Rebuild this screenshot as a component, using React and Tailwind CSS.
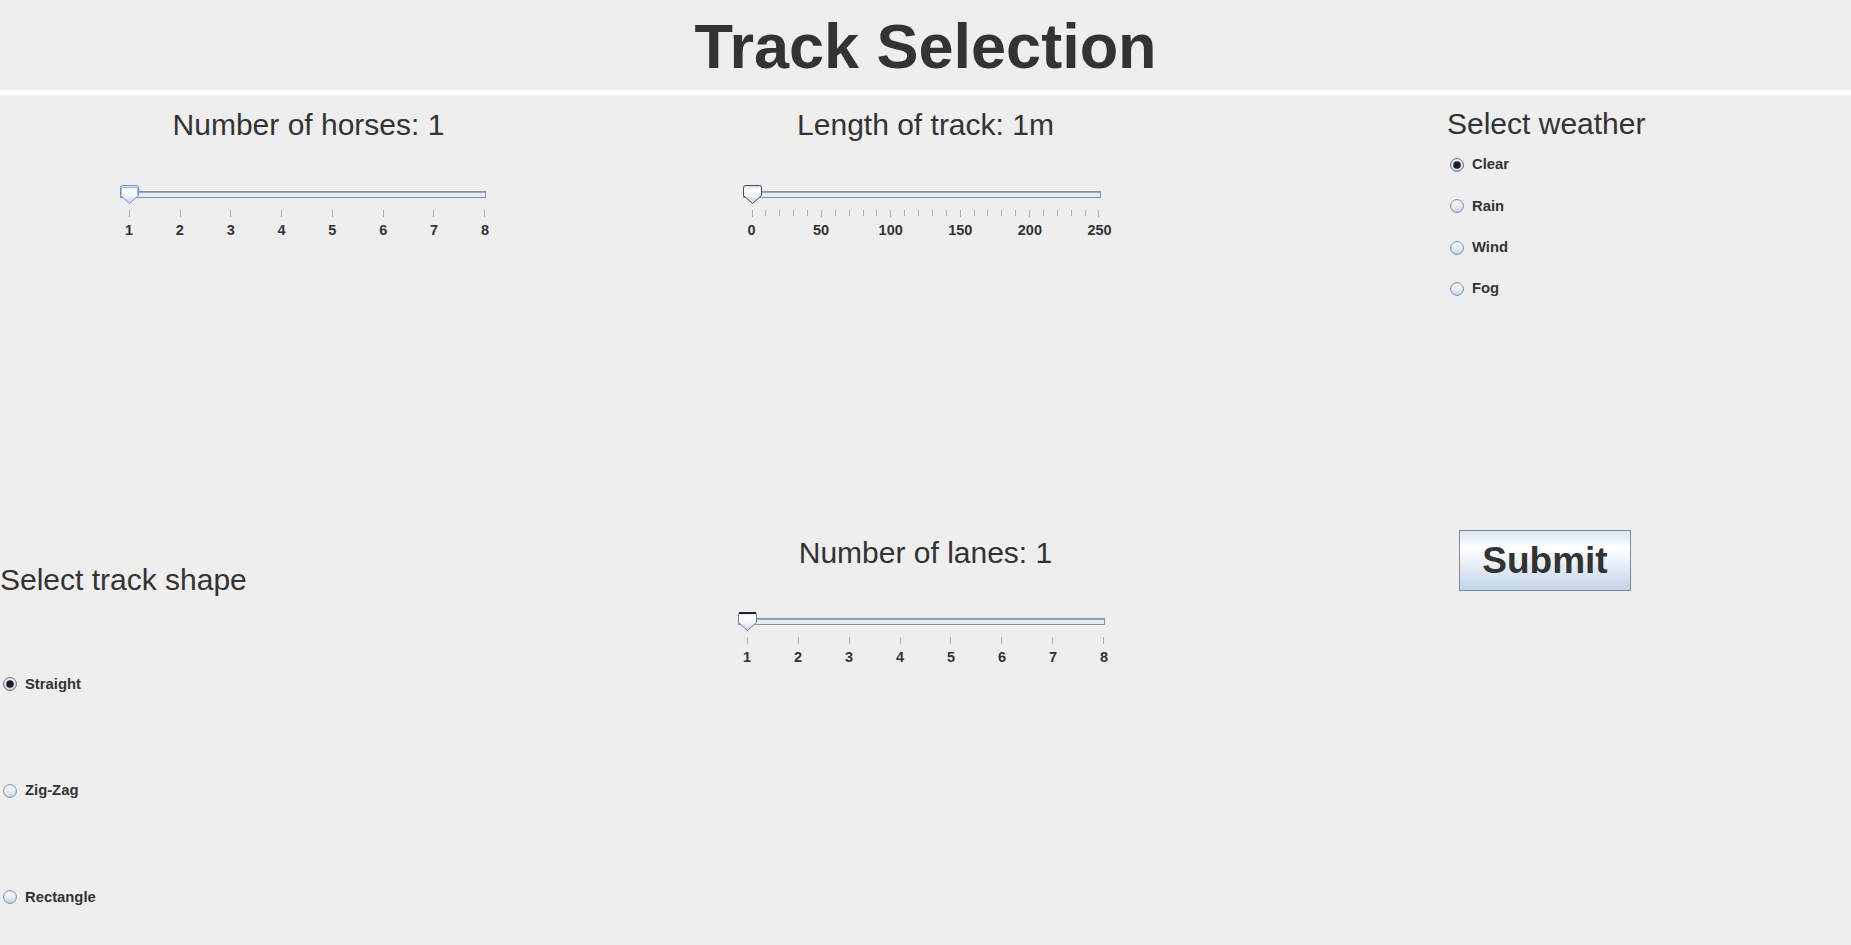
import React from 'react'

const Thumb = ({ variant = 'focus' }) => {
  const stroke = variant === 'focus' ? '#6f8fcc' : variant === 'dark' ? '#4a4a4a' : '#7b7b7b'
  return (
    <svg width="19" height="19" viewBox="0 0 19 19" className="absolute -left-[9px] top-0">
      <defs>
        <linearGradient id={`thumb-${variant}`} x1="0" y1="0" x2="0" y2="1">
          <stop offset="0" stopColor="#cddcf1" />
          <stop offset="0.25" stopColor="#ffffff" />
          <stop offset="0.6" stopColor="#f1f5fb" />
          <stop offset="1" stopColor="#bcd0ea" />
        </linearGradient>
      </defs>
      <path
        d="M0.5 2.5 Q0.5 0.5 2.5 0.5 L16.5 0.5 Q18.5 0.5 18.5 2.5 L18.5 10.5 L9.5 18.5 L0.5 10.5 Z"
        fill={`url(#thumb-${variant})`}
        stroke={stroke}
      />
      {variant === 'focus' && (
        <path d="M1.5 2.5 L17.5 2.5 M1.5 2.5 L1.5 10 M17.5 2.5 L17.5 10" stroke="#9fb6e0" />
      )}
      {variant === 'bar' && <path d="M1 1 L18 1" stroke="#222222" strokeWidth="2" />}
    </svg>
  )
}

const Slider = ({ labels, minor = 0, width, thumb }) => {
  const total = (labels.length - 1) * (minor + 1)
  const ticks = []
  for (let i = 0; i <= total; i++) ticks.push(i % (minor + 1) === 0)
  return (
    <div className={`relative ${width}`}>
      {/* track */}
      <div className="h-[19px] pt-[6px]">
        <div className="-ml-[9px] -mr-[1px] h-[7px] border border-[#8494ad] bg-[#e6ecf4] shadow-[inset_0_1px_0_#9aaac2]" />
      </div>
      <Thumb variant={thumb} />
      {/* ticks */}
      <div className="mt-[6px] flex h-[7px] justify-between">
        {ticks.map((major, i) => (
          <div key={i} className={`w-px bg-[#a2b2c9] ${major ? 'h-[7px]' : 'h-[6px]'}`} />
        ))}
      </div>
      {/* labels */}
      <div className="mt-[4.5px] flex justify-between">
        {labels.map((l) => (
          <div key={l} className="flex w-0 justify-center">
            <span className="text-[14.5px] font-bold leading-[17px] text-[#333333]">{l}</span>
          </div>
        ))}
      </div>
    </div>
  )
}

const Radio = ({ checked, label }) => (
  <div className="flex items-center gap-2 pl-[3px]">
    <svg width="14" height="14" viewBox="0 0 14 14">
      <defs>
        <linearGradient id="radio-fill" x1="0" y1="0" x2="0" y2="1">
          <stop offset="0" stopColor="#f7f9fc" />
          <stop offset="0.5" stopColor="#e9eef6" />
          <stop offset="1" stopColor="#c3d3ea" />
        </linearGradient>
      </defs>
      <circle cx="7" cy="7" r="6.4" fill="url(#radio-fill)" stroke={checked ? '#5f6772' : '#7f8b9e'} />
      {checked && <circle cx="7" cy="7" r="3.8" fill="#1f1f1f" />}
    </svg>
    <span className="text-[14.8px] font-bold leading-[17px] text-[#333333]">{label}</span>
  </div>
)

const App = () => {
  return (
    <div className="h-screen w-full overflow-hidden bg-[#eeeeee] font-['Liberation_Sans',Arial,sans-serif] text-[#333333]">
      {/* Header */}
      <div className="h-[95px] border-b-[5px] border-white pt-[10px] text-center">
        <h1 className="text-[63px] font-bold leading-[72px]">Track Selection</h1>
      </div>

      <div className="grid grid-cols-3 grid-rows-[425px_425px]">
        {/* Horses */}
        <div className="flex flex-col items-center pt-[13px]">
          <div className="text-[30px] leading-[34px]">Number of horses: 1</div>
          <div className="-ml-[3px] mt-[43px]">
            <Slider labels={['1', '2', '3', '4', '5', '6', '7', '8']} width="w-[356px]" thumb="focus" />
          </div>
        </div>

        {/* Length */}
        <div className="flex flex-col items-center pt-[13px]">
          <div className="text-[30px] leading-[34px]">Length of track: 1m</div>
          <div className="mt-[43px]">
            <Slider labels={['0', '50', '100', '150', '200', '250']} minor={4} width="w-[348px]" thumb="dark" />
          </div>
        </div>

        {/* Weather */}
        <div className="pl-[213px] pt-[8px]">
          <div className="flex h-[41.3px] items-center pt-[1px] text-[30px] leading-[34px]">Select weather</div>
          {['Clear', 'Rain', 'Wind', 'Fog'].map((w, i) => (
            <div key={w} className="flex h-[41.3px] items-center">
              <Radio checked={i === 0} label={w} />
            </div>
          ))}
        </div>

        {/* Track shape */}
        <div className="pt-[43px]">
          <div className="text-[30px] leading-[34px]">Select track shape</div>
          <div className="mt-[34px]">
            {['Straight', 'Zig-Zag', 'Rectangle'].map((s, i) => (
              <div key={s} className="flex h-[106.5px] items-center">
                <Radio checked={i === 0} label={s} />
              </div>
            ))}
          </div>
        </div>

        {/* Lanes */}
        <div className="flex flex-col items-center pt-[16px]">
          <div className="text-[30px] leading-[34px]">Number of lanes: 1</div>
          <div className="mt-[42px]">
            <Slider labels={['1', '2', '3', '4', '5', '6', '7', '8']} width="w-[357px]" thumb="bar" />
          </div>
        </div>

        {/* Submit */}
        <div className="pl-[225px] pt-[10px]">
          <button className="flex h-[61px] w-[172px] items-center justify-center border border-[#7d8a9c] bg-[linear-gradient(to_bottom,#dae5f2_0%,#ffffff_28%,#e9f0f8_55%,#c2d4ea_100%)] text-[37px] font-bold leading-none text-[#333333]">
            Submit
          </button>
        </div>
      </div>
    </div>
  )
}

export default App
